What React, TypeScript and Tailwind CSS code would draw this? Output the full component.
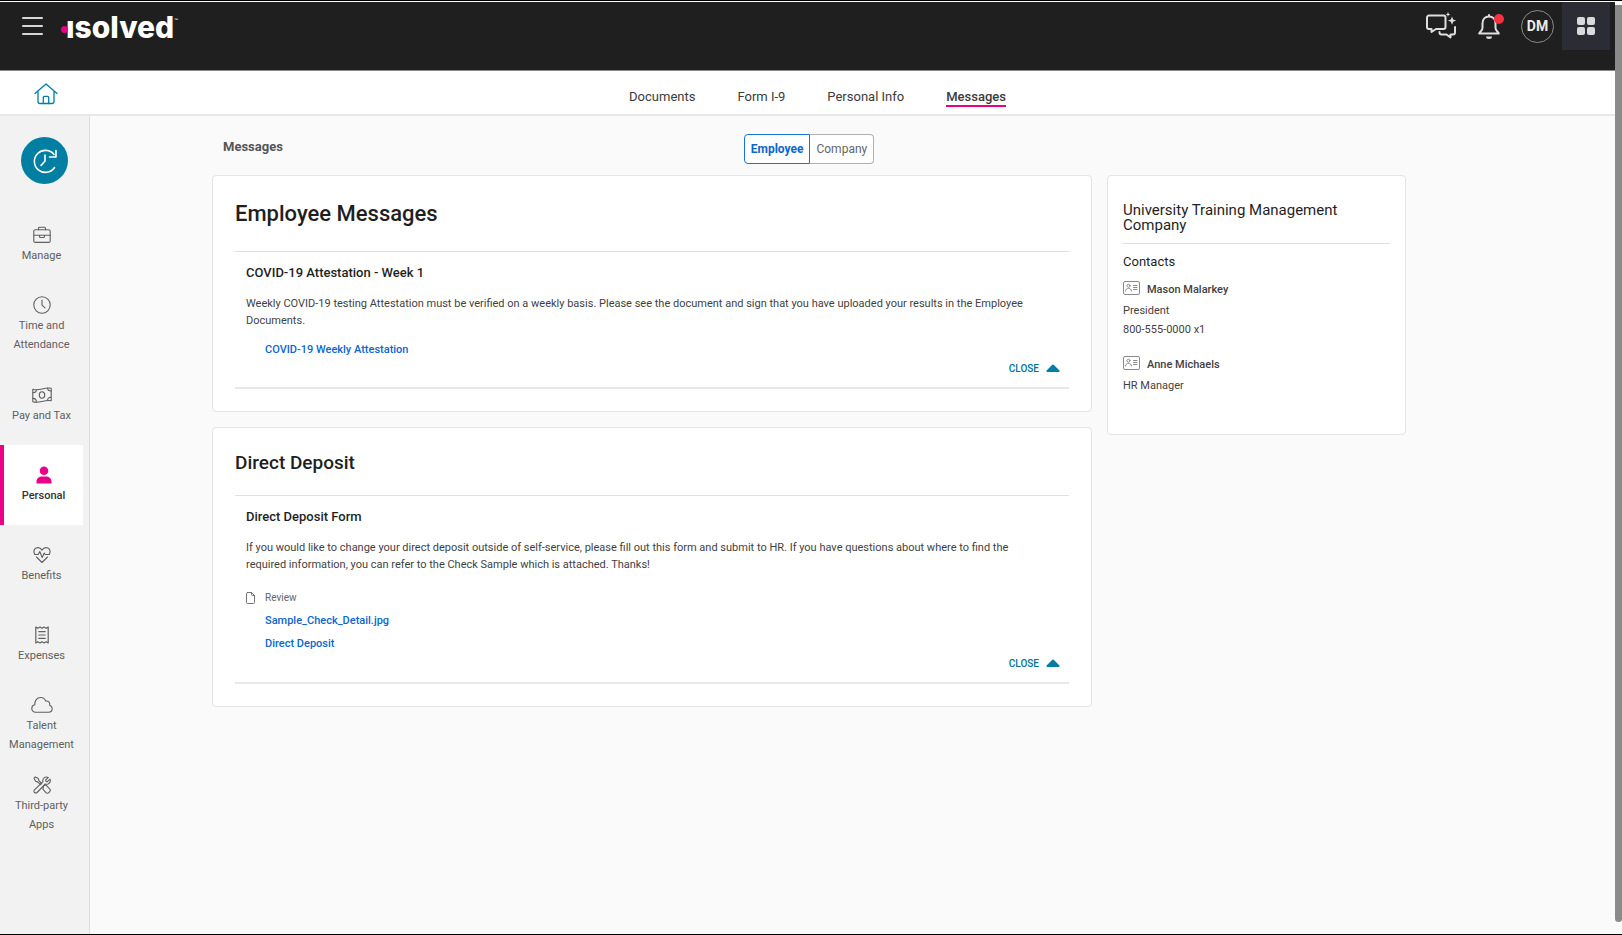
import type { ReactNode } from 'react';
import clsx from 'clsx';

interface SideItem {
  label: string;
  icon: ReactNode;
  active?: boolean;
}

interface MessageCardProps {
  heading: ReactNode;
  title: string;
  body: string;
  children: ReactNode;
}

interface ContactProps {
  name: string;
  lines: string[];
}

const stroke = {
  fill: 'none',
  stroke: 'currentColor',
  strokeLinecap: 'round' as const,
  strokeLinejoin: 'round' as const,
};

const sideItems: SideItem[] = [
  {
    label: 'Manage',
    icon: (
      <svg width="18" height="18" viewBox="0 0 18 18" strokeWidth="1.1" {...stroke}>
        <rect x="0.8" y="3.8" width="16.4" height="12.6" rx="1.5" />
        <path d="M5.5 3.8V2.2a1 1 0 0 1 1-1h5a1 1 0 0 1 1 1v1.6M.8 9.3h5.7M11.5 9.3h5.7M6.5 9.3h5v1.2a1 1 0 0 1-1 1h-3a1 1 0 0 1-1-1z" />
      </svg>
    ),
  },
  {
    label: 'Time and Attendance',
    icon: (
      <svg width="18" height="18" viewBox="0 0 18 18" strokeWidth="1.1" {...stroke}>
        <circle cx="9" cy="9" r="8.2" />
        <path d="M9 4v5.2l3 2.6" />
      </svg>
    ),
  },
  {
    label: 'Pay and Tax',
    icon: (
      <svg width="20" height="18" viewBox="0 0 20 18" strokeWidth="1.1" {...stroke}>
        <path d="M.8 3.2c3 1.2 6 .6 9.2-.2s6.200-1.500 9.200-.8v12.600c-3-.8-6-.1-9.200.7s-6.200 1.200-9.200.3z" />
        <ellipse cx="10" cy="9" rx="2.7" ry="3.2" />
        <path d="M4.400 3.700c0 2-1.400 3-3.600 3M15.600 2c0 2 1.400 3 3.600 3M.8 12.400c2.200 0 3.600 1.500 3.600 3.600M15.600 14.300c0-2 1.400-3 3.600-3" />
      </svg>
    ),
  },
  {
    label: 'Personal',
    active: true,
    icon: (
      <svg width="18" height="18" viewBox="0 0 18 18" fill="#ea0088">
        <circle cx="9" cy="4.7" r="4.3" />
        <path d="M1.500 17v-1.500c0-3 2.500-5 5.500-5h4c3 0 5.500 2 5.500 5V17c0 .4-.2.600-.6.600H2.100c-.4 0-.6-.2-.6-.6z" />
      </svg>
    ),
  },
  {
    label: 'Benefits',
    icon: (
      <svg width="18" height="18" viewBox="0 0 18 18" strokeWidth="1.1" {...stroke}>
        <path d="M2 8.500C.2 6.200.7 3.200 3 2.100c2.200-1 4.600-.2 6 2 1.400-2.200 3.800-3 6-2 2.300 1.100 2.800 4.100 1 6.400" />
        <path d="M1.800 8.500h3.400l1.600-3 2.400 6 2-4.500 1 1.500h4M3.500 11 9 16.500l5.500-5.500" />
      </svg>
    ),
  },
  {
    label: 'Expenses',
    icon: (
      <svg width="18" height="18" viewBox="0 0 18 18" strokeWidth="1.2" {...stroke}>
        <path d="M2.800 1l2 1.300L7 1l2 1.300L11 1l2.200 1.300 2-1.300v16l-2-1.300L11 17l-2-1.300L7 17l-2.200-1.300-2 1.300z" />
        <path d="M5.800 5.600h6.400M5.800 9h6.400M5.800 12.400h6.400" />
      </svg>
    ),
  },
  {
    label: 'Talent Management',
    icon: (
      <svg width="22" height="18" viewBox="0 0 22 18" strokeWidth="1.1" {...stroke}>
        <path d="M4.500 16.200C2.300 16.200.8 14.600.8 12.500c0-1.900 1.300-3.400 3-3.700C3.500 4.800 6 1.500 9.600 1.500c2.400 0 4.300 1.300 5.100 3.500 2.700-.4 4.500 1.500 4 4.200 1.500.6 2.500 1.800 2.500 3.300 0 2.200-1.500 3.700-3.700 3.700z" />
      </svg>
    ),
  },
  {
    label: 'Third-party Apps',
    icon: (
      <svg width="18" height="18" viewBox="0 0 18 18" strokeWidth="1.1" {...stroke}>
        <path d="M1 2.200 2.300.9l3 1.700.6 2 2.800 2.900-1.200 1.200-2.900-2.800-2-.6zM10.500 10.200l1.200-1.100 1.600.2 3.400 3.500a2 2 0 0 1 0 2.900l-.9.9a2 2 0 0 1-2.900 0l-3-3.400z" />
        <path d="M15.300 1.400 12.700 4l.3 1.400 1.400.3L17 3.100c.7 2-.1 4-1.900 4.800-1 .4-2 .4-2.800.1l-8.200 8.500a1.800 1.800 0 0 1-2.600-2.600L10 5.700c-.8-3 1.800-5.800 5.300-4.300z" />
      </svg>
    ),
  },
];

const tabs = ['Documents', 'Form I-9', 'Personal Info', 'Messages'];

function TopBar() {
  return (
    <header className="flex h-[69px] items-start justify-between border-b border-[#8a8a8a] bg-[#1f1f1f]">
      <div className="flex items-center pt-[10px] pl-[22px]">
        <button type="button" aria-label="Menu" className="flex w-[21px] flex-col gap-[6px]">
          <span className="h-[2px] w-full rounded bg-[#d8d8d8]" />
          <span className="h-[2px] w-full rounded bg-[#d8d8d8]" />
          <span className="h-[2px] w-full rounded bg-[#d8d8d8]" />
        </button>
        <a href="#" className="ml-[18px] flex h-7 items-center pt-[2px] text-white">
          <span className="z-10 -mr-[2px] mt-1 size-[7px] rounded-full bg-[#ea0088]" />
          <span className="font-[Inter] text-[30px] leading-7 font-extrabold">ısolved</span>
          <span className="self-start font-[Lato] text-[5px] leading-3">™</span>
        </a>
      </div>
      <div className="flex items-start pr-[5px]">
        <button type="button" aria-label="Chat" className="mt-[10px] text-[#dedede]">
          <svg width="32" height="28" viewBox="0 0 32 28" strokeWidth="2" {...stroke}>
            <path d="M4 3.500h14.500a2 2 0 0 1 2 2v9.500a2 2 0 0 1-2 2H11l-4.500 3v-3H4a2 2 0 0 1-2-2V5.500a2 2 0 0 1 2-2z" />
            <path d="M14.500 20v.5a2 2 0 0 0 2 2h5l4 3v-3H28a2 2 0 0 0 2-2V15" />
            <path
              d="M27 4.500l1.200 2.900 2.900 1.200-2.900 1.200-1.200 2.900-1.200-2.900-2.900-1.200 2.900-1.200zM23 0l.7 1.700 1.700.7-1.700.7-.7 1.700-.7-1.700-1.700-.7 1.700-.7z"
              fill="currentColor"
              stroke="none"
            />
          </svg>
        </button>
        <button type="button" aria-label="Notifications" className="relative mt-[10px] ml-5 text-[#dedede]">
          <svg width="24" height="28" viewBox="0 0 24 28" strokeWidth="2" {...stroke}>
            <path d="M12 4.500c-4 0-6.500 3-6.500 7V16c0 2.500-2.300 3.500-3.300 5.500h19.600c-1-2-3.300-3-3.300-5.500v-4.500c0-4-2.500-7-6.500-7zM12 4.500V3" />
            <path d="M9 24.500h6a3 2.500 0 0 1-6 0z" fill="currentColor" stroke="none" />
          </svg>
          <span className="absolute top-[2px] -right-[3px] size-[10px] rounded-full bg-[#f5333f]" />
        </button>
        <button type="button" className="mt-2 ml-5 size-[33px] rounded-full border border-[#8a8a8a] text-[14px] font-bold text-[#ececec]">
          DM
        </button>
        <button type="button" aria-label="Apps" className="ml-2 flex h-[48px] w-[48px] items-center justify-center bg-[#2c2c35]">
          <span className="grid grid-cols-2 gap-[2px]">
            <span className="size-2 rounded-[2px] bg-[#dadada]" />
            <span className="size-2 rounded-[2px] bg-[#dadada]" />
            <span className="size-2 rounded-[2px] bg-[#dadada]" />
            <span className="size-2 rounded-[2px] bg-[#dadada]" />
          </span>
        </button>
      </div>
    </header>
  );
}

function TabBar() {
  return (
    <div className="grid h-[45px] grid-cols-[1fr_auto_1fr] border-b-2 border-[#e8e8e8] bg-white">
      <a href="#" aria-label="Home" className="mt-3 ml-[34px] w-6 text-[#007fa3]">
        <svg width="24" height="22" viewBox="0 0 24 22" strokeWidth="1.3" {...stroke}>
          <path d="M1 10.500 12 1l11 9.500M4 8.500V18.500a2 2 0 0 0 2 2h12a2 2 0 0 0 2-2V8.500" />
          <path d="M9.300 20.500v-6.200a1 1 0 0 1 1-1h3.400a1 1 0 0 1 1 1v6.200" />
        </svg>
      </a>
      <nav className="flex items-start gap-[42px] pt-[17px] pl-5 text-[13px] leading-[17px] text-[#3a3a3a]">
        {tabs.map((tab) => (
          <a key={tab} href="#" className={clsx(tab === 'Messages' && 'border-b-2 border-[#ea0088] font-medium')}>
            {tab}
          </a>
        ))}
      </nav>
    </div>
  );
}

function SideBar() {
  return (
    <aside className="w-[90px] shrink-0 border-r border-[#dcdcdc] bg-[#f2f2f2] pt-[21px]">
      <button
        type="button"
        aria-label="Clock in"
        className="ml-[21px] flex size-[47px] items-center justify-center rounded-full bg-[#007fa3] text-white"
      >
        <svg width="26" height="26" viewBox="0 0 26 26" strokeWidth="1.6" {...stroke}>
          <path d="M22.500 19.500A11 11 0 1 1 22 6.500" />
          <path d="M24 2.500v6.500h-6.500M13 7v6l-4 4.500" />
        </svg>
      </button>
      <nav className="mt-[21px] w-[83px]">
        {sideItems.map(({ label, icon, active }) => (
          <a
            key={label}
            href="#"
            className={clsx(
              'flex h-20 flex-col items-center justify-center px-2 text-center text-[11px] leading-[19px]',
              active ? 'border-l-4 border-[#ea0088] bg-white font-medium text-[#333]' : 'text-[#606060]',
            )}
          >
            {icon}
            <span className="mt-[2px]">{label}</span>
          </a>
        ))}
      </nav>
    </aside>
  );
}

function MessageCard({ heading, title, body, children }: MessageCardProps) {
  return (
    <section className="rounded border border-[#e4e4e4] bg-white px-[22px] pb-[22px]">
      {heading}
      <div className="border-t border-b-2 border-t-[#e0e0e0] border-b-[#e8e8e8] pt-[11px] pr-[9px] pb-[10px] pl-[11px]">
        <h3 className="text-[13px] leading-5 font-medium text-[#1f1f1f]">{title}</h3>
        <p className="mt-3 pr-5 text-[11px] leading-[17px] text-[#3f3f3f]">{body}</p>
        {children}
        <div className="flex justify-end">
          <button type="button" className="flex items-center gap-[7px] text-[10px] leading-[17px] font-medium text-[#007396]">
            CLOSE
            <svg width="14" height="9" viewBox="0 0 14 9" fill="#007fa3">
              <path d="M6.300.8a1 1 0 0 1 1.400 0l5.500 5.500c.8.8.4 1.700-.6 1.700H1.400C.4 8 0 7.100.8 6.300z" />
            </svg>
          </button>
        </div>
      </div>
    </section>
  );
}

function Contact({ name, lines }: ContactProps) {
  return (
    <div className="text-[11px] leading-[19px] text-[#3f3f3f]">
      <div className="flex items-center gap-[7px]">
        <svg width="17" height="14" viewBox="0 0 17 14" strokeWidth="1" className="mb-1 text-[#8a8a8a]" {...stroke}>
          <rect x="0.5" y="0.5" width="16" height="13" rx="1.5" />
          <circle cx="5.5" cy="4.7" r="1.5" />
          <path d="M2.500 10c.3-1.800 1.300-2.600 3-2.600s2.700.8 3 2.600M10.500 4.500h3.500M10.500 6.500h3.500M10.500 8.500h3.500" />
        </svg>
        <strong className="font-medium">{name}</strong>
      </div>
      <div className="mt-[2px]">
        {lines.map((line) => (
          <p key={line}>{line}</p>
        ))}
      </div>
    </div>
  );
}

export default function App() {
  const linkStyle = 'ml-[19px] block w-fit text-[11px] font-medium text-[#0b66cf]';

  return (
    <div className="flex min-h-screen border-t border-b border-black bg-white font-[Roboto,sans-serif]">
      <div className="flex min-w-0 flex-1 flex-col">
        <div className="ml-3 h-px bg-white" />
        <TopBar />
        <TabBar />
        <div className="flex flex-1">
          <SideBar />
          <main className="flex-1 bg-[#fafafa] pt-[18px] pr-5 pl-[122px]">
            <div className="max-w-[1194px]">
              <div className="grid grid-cols-[1fr_auto_1fr]">
                <h1 className="pt-[3px] pl-[11px] text-[13px] leading-5 font-bold text-[#555]">Messages</h1>
                <div className="flex h-[30px] text-[12px]">
                  <button type="button" className="rounded-l border border-[#1a73d4] bg-white px-[6px] font-bold text-[#0b66cf]">
                    Employee
                  </button>
                  <button type="button" className="rounded-r border border-l-0 border-[#b0b0b0] bg-white px-[6px] text-[#666]">
                    Company
                  </button>
                </div>
              </div>

              <div className="mt-[11px] flex items-start gap-[15px]">
                <div className="flex min-w-0 flex-1 flex-col gap-[15px]">
                  <MessageCard
                    heading={<h2 className="pt-6 pb-[23px] text-[22px] leading-[28px] font-medium text-[#1f1f1f]">Employee Messages</h2>}
                    title="COVID-19 Attestation - Week 1"
                    body="Weekly COVID-19 testing Attestation must be verified on a weekly basis. Please see the document and sign that you have uploaded your results in the Employee Documents."
                  >
                    <a href="#" className={clsx(linkStyle, 'mt-3 mb-[2px] leading-[17px]')}>
                      COVID-19 Weekly Attestation
                    </a>
                  </MessageCard>
                  <MessageCard
                    heading={<h2 className="pt-[22px] pb-[19px] text-[19px] leading-[26px] font-medium text-[#1f1f1f]">Direct Deposit</h2>}
                    title="Direct Deposit Form"
                    body="If you would like to change your direct deposit outside of self-service, please fill out this form and submit to HR. If you have questions about where to find the required information, you can refer to the Check Sample which is attached. Thanks!"
                  >
                    <div className="mt-[15px] flex items-center gap-[10px] text-[10px] leading-[19px] text-[#666]">
                      <svg width="9" height="12" viewBox="0 0 9 12" strokeWidth="0.9" {...stroke}>
                        <path d="M1.500.5h4l3 3v7a1 1 0 0 1-1 1h-6a1 1 0 0 1-1-1v-9a1 1 0 0 1 1-1zM5.500.5v2a1 1 0 0 0 1 1h2" />
                      </svg>
                      Review
                    </div>
                    <a href="#" className={clsx(linkStyle, 'mt-[2px] leading-[23px]')}>
                      Sample_Check_Detail.jpg
                    </a>
                    <a href="#" className={clsx(linkStyle, 'leading-[23px]')}>
                      Direct Deposit
                    </a>
                  </MessageCard>
                </div>

                <aside className="min-h-[260px] w-[299px] shrink-0 rounded border border-[#e4e4e4] bg-white px-[15px] pt-[27px]">
                  <h2 className="border-b border-[#e0e0e0] pb-[10px] text-[15px] leading-[15px] text-[#1f1f1f]">
                    University Training Management Company
                  </h2>
                  <h3 className="mt-2 mb-2 text-[13px] leading-5 text-[#1f1f1f]">Contacts</h3>
                  <div className="flex flex-col gap-4">
                    <Contact name="Mason Malarkey" lines={['President', '800-555-0000 x1']} />
                    <Contact name="Anne Michaels" lines={['HR Manager']} />
                  </div>
                </aside>
              </div>
            </div>
          </main>
        </div>
      </div>
      <div className="flex w-[7px] flex-col bg-[#fafafa] pt-1 pb-3">
        <div className="flex-1 rounded-b bg-[#8a8a8a]" />
      </div>
    </div>
  );
}
